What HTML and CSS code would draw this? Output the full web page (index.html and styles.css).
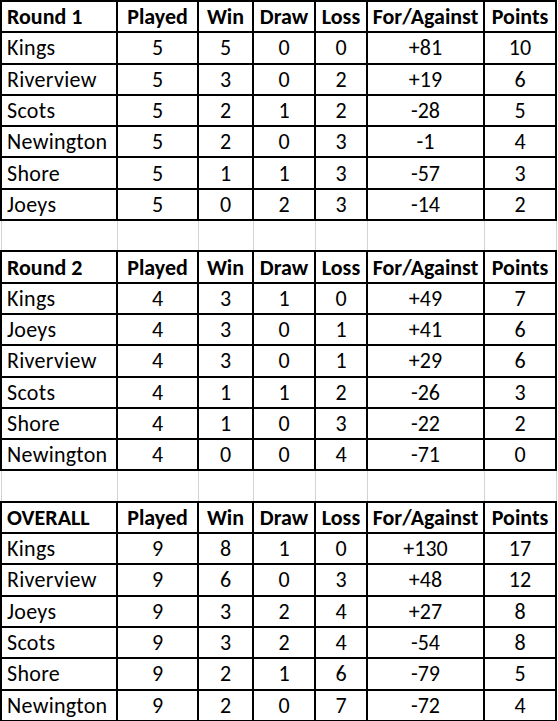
FILE: index.html
```html
<!DOCTYPE html>
<html>
<head>
<meta charset="utf-8">
<link rel="stylesheet" href="styles.css">
</head>
<body>
<table class="sheet">
<colgroup>
<col class="c1"><col class="c2"><col class="c3"><col class="c4"><col class="c5"><col class="c6"><col class="c7">
</colgroup>
<tbody>
<tr class="hd"><td class="team">Round 1</td><td>Played</td><td>Win</td><td>Draw</td><td>Loss</td><td>For/Against</td><td>Points</td></tr>
<tr><td class="team">Kings</td><td>5</td><td>5</td><td>0</td><td>0</td><td>+81</td><td>10</td></tr>
<tr><td class="team">Riverview</td><td>5</td><td>3</td><td>0</td><td>2</td><td>+19</td><td>6</td></tr>
<tr><td class="team">Scots</td><td>5</td><td>2</td><td>1</td><td>2</td><td>-28</td><td>5</td></tr>
<tr><td class="team">Newington</td><td>5</td><td>2</td><td>0</td><td>3</td><td>-1</td><td>4</td></tr>
<tr><td class="team">Shore</td><td>5</td><td>1</td><td>1</td><td>3</td><td>-57</td><td>3</td></tr>
<tr><td class="team">Joeys</td><td>5</td><td>0</td><td>2</td><td>3</td><td>-14</td><td>2</td></tr>
<tr class="gap"><td></td><td></td><td></td><td></td><td></td><td></td><td></td></tr>
<tr class="hd"><td class="team">Round 2</td><td>Played</td><td>Win</td><td>Draw</td><td>Loss</td><td>For/Against</td><td>Points</td></tr>
<tr><td class="team">Kings</td><td>4</td><td>3</td><td>1</td><td>0</td><td>+49</td><td>7</td></tr>
<tr><td class="team">Joeys</td><td>4</td><td>3</td><td>0</td><td>1</td><td>+41</td><td>6</td></tr>
<tr><td class="team">Riverview</td><td>4</td><td>3</td><td>0</td><td>1</td><td>+29</td><td>6</td></tr>
<tr><td class="team">Scots</td><td>4</td><td>1</td><td>1</td><td>2</td><td>-26</td><td>3</td></tr>
<tr><td class="team">Shore</td><td>4</td><td>1</td><td>0</td><td>3</td><td>-22</td><td>2</td></tr>
<tr><td class="team">Newington</td><td>4</td><td>0</td><td>0</td><td>4</td><td>-71</td><td>0</td></tr>
<tr class="gap"><td></td><td></td><td></td><td></td><td></td><td></td><td></td></tr>
<tr class="hd"><td class="team">OVERALL</td><td>Played</td><td>Win</td><td>Draw</td><td>Loss</td><td>For/Against</td><td>Points</td></tr>
<tr><td class="team">Kings</td><td>9</td><td>8</td><td>1</td><td>0</td><td>+130</td><td>17</td></tr>
<tr><td class="team">Riverview</td><td>9</td><td>6</td><td>0</td><td>3</td><td>+48</td><td>12</td></tr>
<tr><td class="team">Joeys</td><td>9</td><td>3</td><td>2</td><td>4</td><td>+27</td><td>8</td></tr>
<tr><td class="team">Scots</td><td>9</td><td>3</td><td>2</td><td>4</td><td>-54</td><td>8</td></tr>
<tr><td class="team">Shore</td><td>9</td><td>2</td><td>1</td><td>6</td><td>-79</td><td>5</td></tr>
<tr><td class="team">Newington</td><td>9</td><td>2</td><td>0</td><td>7</td><td>-72</td><td>4</td></tr>
</tbody>
</table>
</body>
</html>
```
FILE: styles.css
```css
html, body {
  margin: 0;
  padding: 0;
  background: #ffffff;
}
.sheet {
  border-collapse: collapse;
  table-layout: fixed;
  width: 557px;
  font-family: "Carlito", "Lato", "Liberation Sans", sans-serif;
  font-size: 22px;
  color: #000;
}
.c1 { width: 116px; }
.c2 { width: 81px; }
.c3 { width: 55px; }
.c4 { width: 62px; }
.c5 { width: 52px; }
.c6 { width: 117px; }
.c7 { width: 72px; }
.sheet td {
  border: 2px solid #000;
  height: 28.3px;
  padding: 1px 0 0 0;
  text-align: center;
  vertical-align: middle;
  white-space: nowrap;
  overflow: hidden;
  line-height: 26px;
}
.sheet td.team {
  text-align: left;
  padding-left: 5px;
  letter-spacing: 0.3px;
}
.hd td {
  font-weight: bold;
}
.hd td.team {
  letter-spacing: 0;
}
.gap td {
  border-top: 2px solid #000;
  border-bottom: 2px solid #000;
  border-left: 1px solid #d4d4d4;
  border-right: 1px solid #d4d4d4;
}
```
